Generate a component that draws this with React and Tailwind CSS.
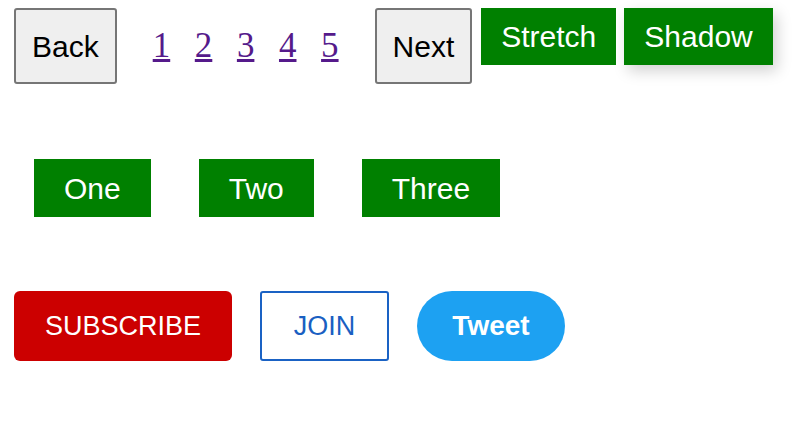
export default function App() {
  const sans = 'font-["Liberation_Sans",Arial,sans-serif]'
  return (
    <div className={`w-[806px] h-[435px] bg-white ${sans}`}>
      <div className="flex items-start pt-2 pl-[14px]">
        <button className="h-[76px] px-4 border-2 border-[#767676] rounded-[3px] bg-[#efefef] text-[30px] text-black">Back</button>
        <div className="ml-[36px] h-[76px] flex items-center gap-[24.6px] font-['Liberation_Serif',serif] text-[35px] leading-[40px]">
          {[1, 2, 3, 4, 5].map(n => (
            <a key={n} href="#" className="text-[#551a8b] underline">{n}</a>
          ))}
        </div>
        <button className="ml-[36px] h-[76px] px-4 border-2 border-[#767676] rounded-[3px] bg-[#efefef] text-[30px] text-black">Next</button>
        <button className="ml-[9px] h-[57px] px-5 bg-[#008000] text-white text-[30px]">Stretch</button>
        <button className="ml-2 h-[57px] px-5 bg-[#008000] text-white text-[30px] shadow-[4px_6px_14px_rgba(0,0,0,0.18)]">Shadow</button>
      </div>
      <div className="flex items-center gap-12 pl-[34px] mt-[75px]">
        <button className="h-[58px] px-[30px] bg-[#008000] text-white text-[30px]">One</button>
        <button className="h-[58px] px-[30px] bg-[#008000] text-white text-[30px]">Two</button>
        <button className="h-[58px] px-[30px] bg-[#008000] text-white text-[30px]">Three</button>
      </div>
      <div className="flex items-center gap-7 pl-[14px] mt-[74px]">
        <button className="h-[70px] w-[218px] rounded-[6px] bg-[#cc0000] text-white text-[27px]">SUBSCRIBE</button>
        <button className="h-[70px] w-[129px] rounded-[3px] border-2 border-[#1a62c4] bg-white text-[#1a5fc2] text-[27px]">JOIN</button>
        <button className="h-[70px] w-[148px] rounded-full bg-[#1da1f2] text-white text-[28px] font-bold">Tweet</button>
      </div>
    </div>
  )
}
